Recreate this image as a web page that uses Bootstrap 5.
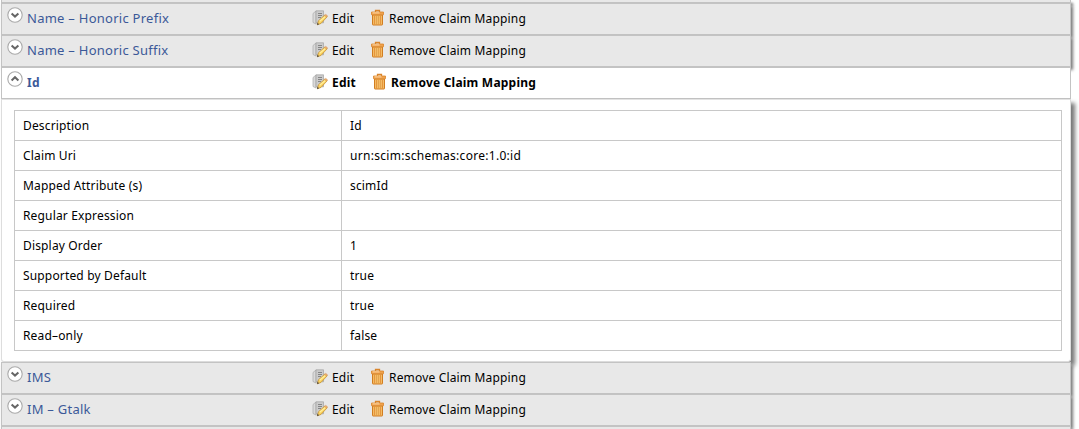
<!DOCTYPE html>
<html lang="en">
<head>
<meta charset="utf-8">
<title>Claim mappings</title>
<link href="https://cdn.jsdelivr.net/npm/bootstrap@5.3.0/dist/css/bootstrap.min.css" rel="stylesheet">
<style>
body{font-family:"Noto Sans","Open Sans",sans-serif;font-size:12px;line-height:18px;color:#000;background:#fff;height:429px;overflow:hidden}
.claims{width:1070px;margin-left:1px}
.claim-head{position:relative;height:32px;background:#e8e8e8;border:1px solid #c3c3c3;box-shadow:2px 3px 3px #777;letter-spacing:.17px}
.claim-head.edge{height:3px;border-top:0}
.claim-head.edge-last{border-top:1px solid #c3c3c3;border-bottom:0}
.claim-head.open{background:#fff;box-shadow:none;font-weight:700;letter-spacing:.22px}
.toggle-icon{width:16px;height:16px;margin:3px 0 0 5px;flex:none}
.claim-title{width:285px;margin-left:4px;padding-top:5px;color:#3b5998;font-size:13px;letter-spacing:.26px;text-decoration:none;white-space:nowrap}
.open .claim-title{font-size:12px;font-weight:700;padding-top:6px}
.act{color:inherit;text-decoration:none;white-space:nowrap;padding-top:6px}
.act svg{width:16px;height:18px;flex:none}
.act-edit{width:58px}
.open .act-edit{width:60px}
.act-edit span{margin-left:4px}
.act-edit svg{margin-top:-1px}
.act-remove svg{margin-top:-1px}
.act-remove span{margin-left:3px}
.claim-body{position:relative;height:263px;padding:10px 9px 0 12px;background:#fff;border:1px solid #ddd;border-top-color:#e3e3e3;box-shadow:4px 4px 4px #777;border-radius:0 0 3px 3px}
.detail{width:1048px;border-collapse:collapse;table-layout:fixed;letter-spacing:.16px}
.detail td{height:30px;padding:0 8px;border:1px solid #c8c8c8;vertical-align:middle;line-height:18px}
.detail td:first-child{width:327px}
.uri-text{letter-spacing:.29px}
</style>
</head>
<body>
<svg class="d-none" xmlns="http://www.w3.org/2000/svg">
<symbol id="down" viewBox="0 0 16 16"><circle cx="8" cy="8" r="7.2" fill="#fff" stroke="#aaa" stroke-width="1.1"/><path d="M4.6 6.4 8 9.6l3.4-3.2" fill="none" stroke="#666" stroke-width="2"/></symbol>
<symbol id="up" viewBox="0 0 16 16"><circle cx="8" cy="8" r="7.2" fill="#fff" stroke="#aaa" stroke-width="1.1"/><path d="M4.6 9.4 8 6.2l3.400 3.200" fill="none" stroke="#666" stroke-width="2"/></symbol>
<symbol id="edit" viewBox="0 0 16 18"><path d="M1 4.500 4 2v13L1 13.500z" fill="#dadada" stroke="#aaa" stroke-width=".7"/><path d="M4 1.800h7.500v12H4z" fill="#cbcbcb" stroke="#a2a2a2" stroke-width=".7"/><path d="M6 4.500h4M6 6.500h4M6 8.500h3" stroke="#858585"/><path d="m5.200 15.900 1.300-4.200 6.100-5.400q1.500-.5 2.600 1.500L9 14.400z" fill="#fbd25f" stroke="#c08a2c" stroke-width=".7"/><path d="m7.700 12.300 5.300-4.600" stroke="#fff0a0" stroke-width="1.200"/><path d="m12.400 6.300 1-.9q1.800.2 2.100 1.700l-.8.900z" fill="#efb078" stroke="#c98a4a" stroke-width=".4"/><path d="m5 16 .5-2.200 1.700 1.500z" fill="#444"/></symbol>
<symbol id="trash" viewBox="0 0 16 18"><path d="M5.500 3V1.500h4V3" fill="none" stroke="#d9852c" stroke-width="1.300"/><path d="M2.500 6h10v9.500q0 .5-.5.500H3q-.5 0-.5-.5z" fill="#f4bc66" stroke="#d27d20"/><path d="M4.500 6.500v9M10.500 6.500v9" stroke="#e5953c"/><path d="M6.500 7v8.500M8.500 7v8.500" stroke="#dd9a45" stroke-width=".7"/><path d="M1.500 3h12v2.700h-12z" fill="#f0a24c" stroke="#d9852c" stroke-width=".8"/><path d="M2.500 3.900h7" stroke="#ffd9a8"/></symbol>
</svg>
<main class="claims">
<div class="claim-head edge"></div>
<div class="claim-head d-flex"><svg class="toggle-icon"><use href="#down"/></svg><a class="claim-title" href="#">Name – Honoric Prefix</a><a class="act act-edit d-flex" href="#"><svg><use href="#edit"/></svg><span>Edit</span></a><a class="act act-remove d-flex" href="#"><svg><use href="#trash"/></svg><span>Remove Claim Mapping</span></a></div>
<div class="claim-head d-flex"><svg class="toggle-icon"><use href="#down"/></svg><a class="claim-title" href="#">Name – Honoric Suffix</a><a class="act act-edit d-flex" href="#"><svg><use href="#edit"/></svg><span>Edit</span></a><a class="act act-remove d-flex" href="#"><svg><use href="#trash"/></svg><span>Remove Claim Mapping</span></a></div>
<div class="claim-head open d-flex"><svg class="toggle-icon"><use href="#up"/></svg><a class="claim-title" href="#">Id</a><a class="act act-edit d-flex" href="#"><svg><use href="#edit"/></svg><span>Edit</span></a><a class="act act-remove d-flex" href="#"><svg><use href="#trash"/></svg><span>Remove Claim Mapping</span></a></div>
<div class="claim-body">
<table class="detail">
<tr><td>Description</td><td>Id</td></tr>
<tr><td>Claim Uri</td><td class="uri-text">urn:scim:schemas:core:1.0:id</td></tr>
<tr><td>Mapped Attribute (s)</td><td>scimId</td></tr>
<tr><td>Regular Expression</td><td></td></tr>
<tr><td>Display Order</td><td>1</td></tr>
<tr><td>Supported by Default</td><td>true</td></tr>
<tr><td>Required</td><td>true</td></tr>
<tr><td>Read–only</td><td>false</td></tr>
</table>
</div>
<div class="claim-head d-flex"><svg class="toggle-icon"><use href="#down"/></svg><a class="claim-title" href="#">IMS</a><a class="act act-edit d-flex" href="#"><svg><use href="#edit"/></svg><span>Edit</span></a><a class="act act-remove d-flex" href="#"><svg><use href="#trash"/></svg><span>Remove Claim Mapping</span></a></div>
<div class="claim-head d-flex"><svg class="toggle-icon"><use href="#down"/></svg><a class="claim-title" href="#">IM – Gtalk</a><a class="act act-edit d-flex" href="#"><svg><use href="#edit"/></svg><span>Edit</span></a><a class="act act-remove d-flex" href="#"><svg><use href="#trash"/></svg><span>Remove Claim Mapping</span></a></div>
<div class="claim-head edge edge-last"></div>
</main>
<script src="https://cdn.jsdelivr.net/npm/bootstrap@5.3.0/dist/js/bootstrap.bundle.min.js"></script>
</body>
</html>
